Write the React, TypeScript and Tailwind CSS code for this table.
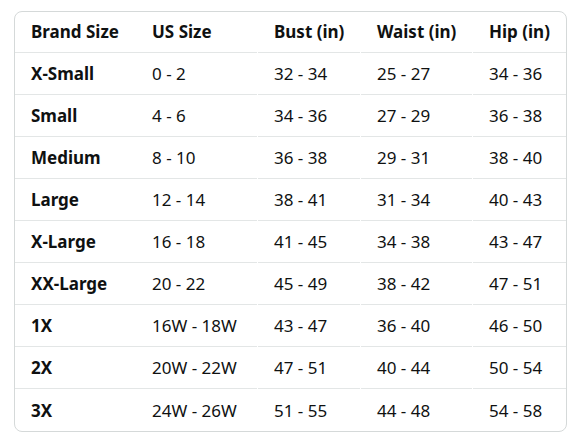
const headers = ['Brand Size', 'US Size', 'Bust (in)', 'Waist (in)', 'Hip (in)']

const rows = [
  ['X-Small', '0 - 2', '32 - 34', '25 - 27', '34 - 36'],
  ['Small', '4 - 6', '34 - 36', '27 - 29', '36 - 38'],
  ['Medium', '8 - 10', '36 - 38', '29 - 31', '38 - 40'],
  ['Large', '12 - 14', '38 - 41', '31 - 34', '40 - 43'],
  ['X-Large', '16 - 18', '41 - 45', '34 - 38', '43 - 47'],
  ['XX-Large', '20 - 22', '45 - 49', '38 - 42', '47 - 51'],
  ['1X', '16W - 18W', '43 - 47', '36 - 40', '46 - 50'],
  ['2X', '20W - 22W', '47 - 51', '40 - 44', '50 - 54'],
  ['3X', '24W - 26W', '51 - 55', '44 - 48', '54 - 58'],
]

// column widths; cols 2-4 leave a 1px gap in the row line
const cols = ['w-[121px]', 'w-[121px] mr-px', 'w-[102px] mr-px', 'w-[111px] mr-px', 'w-[93px]']

function Row({ cells, head, last }: { cells: string[]; head?: boolean; last?: boolean }) {
  return (
    <div className="flex">
      {cells.map((c, i) => (
        <div
          key={i}
          className={`${cols[i]} h-[42px] flex items-center pl-4 ${last ? '' : 'border-b border-[#e3e6e6]'} ${
            head || i === 0 ? 'font-bold' : ''
          }`}
        >
          {c}
        </div>
      ))}
    </div>
  )
}

export default function App() {
  return (
    <div className="w-[588px] h-[441px] bg-white pt-[11px] pl-[14px]">
      <div
        className="w-[553px] border border-[#d5d9d9] rounded-lg overflow-hidden text-[17px] text-[#0f1111] leading-none"
        style={{ fontFamily: '"Noto Sans", "Liberation Sans", sans-serif' }}
      >
        <div className="-mt-px">
          <Row cells={headers} head />
          {rows.map((r, i) => (
            <Row key={r[0]} cells={r} last={i === rows.length - 1} />
          ))}
        </div>
      </div>
    </div>
  )
}
